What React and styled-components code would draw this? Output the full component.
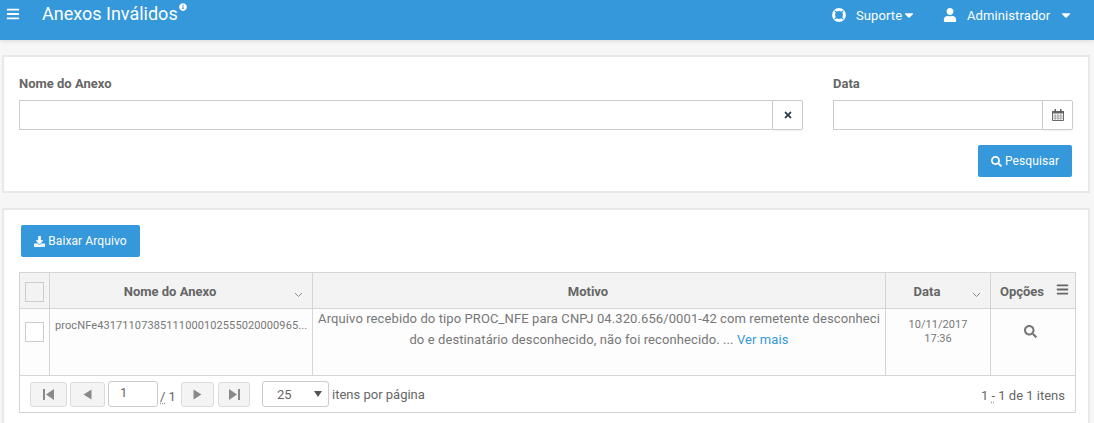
import React from 'react';
import styled, { createGlobalStyle } from 'styled-components';
import { FaBars, FaCaretDown, FaDownload, FaInfoCircle, FaSearch, FaTimes, FaUser } from 'react-icons/fa';

const GlobalStyle = createGlobalStyle`
  html, body {
    margin: 0;
    padding: 0;
    height: 423px;
    overflow: hidden;
    background: #f6f6f6;
    font-family: Roboto, 'Liberation Sans', sans-serif;
    font-size: 13px;
    color: #666;
  }
  * { box-sizing: border-box; }
`;

const Navbar = styled.header`
  display: flex;
  align-items: flex-start;
  height: 40px;
  background: #3498db;
  color: #fff;
  box-shadow: 0 1px 4px rgba(0, 0, 0, 0.12);
`;

const MenuToggle = styled.span`
  display: flex;
  width: 42px;
  padding: 7px 0 0 6px;
  font-size: 14px;
`;

const PageTitle = styled.h1`
  flex: 1;
  margin: 0;
  padding-top: 2px;
  font-size: 18px;
  line-height: 24px;
  font-weight: 400;
  svg { font-size: 8px; vertical-align: 9px; margin-left: 1px; }
`;

const NavItem = styled.span`
  display: flex;
  align-items: center;
  height: 30px;
  width: ${(props) => props.width};
  font-size: 13px;
  letter-spacing: 0.1px;
`;

const NavIcon = styled.span`
  display: flex;
  width: ${(props) => props.gap};
  font-size: 14px;
  svg { width: 14px; height: 14px; }
`;

const Caret = styled.span`
  display: flex;
  margin-left: ${(props) => props.offset || '0'};
  font-size: 14px;
`;

const Panel = styled.section`
  margin: ${(props) => props.margin};
  width: 1088px;
  height: ${(props) => props.height};
  padding: ${(props) => props.padding};
  background: #fff;
  border: 2px solid #e8e8e8;
`;

const FilterGrid = styled.div`
  display: grid;
  grid-template-columns: 784px 240px;
  column-gap: 30px;
`;

const Label = styled.label`
  display: block;
  height: 24px;
  font-size: 13px;
  line-height: 15px;
  font-weight: 700;
  color: #666;
`;

const InputGroup = styled.div`
  display: flex;
  height: 30px;
`;

const TextInput = styled.input`
  flex: 1;
  min-width: 0;
  height: 30px;
  border: 1px solid #ccc;
  border-right: 0;
  background: #fff;
  outline: none;
`;

const AddOn = styled.span`
  display: flex;
  align-items: center;
  justify-content: center;
  width: 31px;
  height: 30px;
  border: 1px solid #ccc;
  border-radius: 0 2px 2px 0;
  box-shadow: 0 1px 2px rgba(0, 0, 0, 0.06);
  font-size: ${(props) => props.iconSize};
  color: ${(props) => props.color};
`;

const Actions = styled.div`
  display: flex;
  justify-content: flex-end;
  margin: 15px 1px 0 0;
`;

const PrimaryButton = styled.button`
  display: flex;
  align-items: center;
  justify-content: center;
  gap: 3px;
  width: ${(props) => props.width};
  height: 32px;
  padding: 0;
  border: 0;
  border-radius: 2px;
  background: #3498db;
  color: #fff;
  font-family: inherit;
  font-size: 12px;
  letter-spacing: 0.1px;
  svg { font-size: 11px; }
`;

const Table = styled.div`
  width: 1057px;
  margin: 15px 0 0 -2px;
  border: 1px solid #d5d5d5;
`;

const GridRow = styled.div`
  display: grid;
  grid-template-columns: 29px 263px 573px 105px 1fr;
  height: ${(props) => props.height};
  background: ${(props) => props.background};
  border-bottom: 1px solid #d5d5d5;
`;

const HeadCell = styled.div`
  position: relative;
  display: flex;
  align-items: center;
  justify-content: center;
  padding: ${(props) => props.padding || '1px 22px 0 0'};
  border-left: ${(props) => (props.first ? '0' : '1px solid #d5d5d5')};
  font-size: 13px;
  font-weight: 700;
  color: #666;
`;

const BodyCell = styled.div`
  padding: ${(props) => props.padding || '0'};
  border-left: ${(props) => (props.first ? '0' : '1px solid #d5d5d5')};
  font-size: ${(props) => props.size || '13px'};
  line-height: ${(props) => props.leading || '21px'};
  letter-spacing: ${(props) => props.tracking || '0'};
  text-align: ${(props) => props.align || 'center'};
  color: #777;
`;

const FileName = styled(BodyCell)`
  white-space: nowrap;
  overflow: hidden;
`;

const ReasonText = styled.p`
  margin: -1px 0 0;
`;

const CheckBox = styled.span`
  display: block;
  width: 19px;
  height: 20px;
  border: 1px solid #ccc;
  background: ${(props) => props.background || '#fff'};
`;

const SortMark = styled.svg`
  position: absolute;
  right: 9px;
  bottom: 10px;
  width: 9px;
  height: 6px;
  fill: none;
  stroke: #888;
`;

const ColumnMenu = styled.span`
  position: absolute;
  right: 6px;
  top: 10px;
  display: flex;
  font-size: 13px;
  color: #666;
`;

const MoreLink = styled.a`
  color: #3498db;
`;

const Pager = styled.div`
  display: flex;
  align-items: center;
  height: 36px;
  padding: 0 10px;
  color: #666;
  font-size: 13px;
`;

const PagerButton = styled.span`
  display: flex;
  align-items: center;
  justify-content: center;
  width: ${(props) => props.width};
  height: 25px;
  margin-right: ${(props) => props.gap};
  background: #f4f4f4;
  border: 1px solid #dcdcdc;
  border-radius: 3px;
  svg { width: 13px; height: 13px; fill: #8a8a8a; }
`;

const PageInput = styled.span`
  width: 50px;
  height: 26px;
  margin-right: 2px;
  padding: 2px 0 0 11px;
  border: 1px solid #ccc;
  border-radius: 3px;
  background: #fff;
  line-height: 18px;
`;

const PageTotal = styled.span`
  width: 21px;
  padding-top: 4px;
  white-space: nowrap;
`;

const DottedMark = styled.span`
  text-decoration: underline dotted #999;
  text-underline-offset: 2px;
`;

const PageSize = styled.span`
  display: flex;
  align-items: center;
  justify-content: space-between;
  width: 67px;
  height: 26px;
  margin: 0 3px 0 12px;
  padding: 0 6px 0 14px;
  border: 1px solid #ccc;
  border-radius: 3px;
  font-size: 13px;
  svg { width: 8px; height: 6px; fill: #555; }
`;

const PagerInfo = styled.span`
  margin-left: auto;
  padding-top: 3px;
  font-size: 13px;
`;

const LifeRing = () => (
  <svg viewBox="0 0 14 14">
    <circle cx="7" cy="7" r="5.4" fill="none" stroke="#fff" strokeWidth="3" />
    <path d="M4.4 4.4L2.6 2.6M9.6 4.4l1.8-1.8M4.4 9.6l-1.8 1.8M9.6 9.6l1.8 1.8" stroke="#3498db" strokeWidth="1.1" />
  </svg>
);

const CalendarIcon = () => (
  <svg width="12" height="12" viewBox="0 0 12 12">
    <path d="M.5 2.5h11v9H.5z" fill="none" stroke="#666" />
    <path d="M0 2h12v2.5H0z" fill="#666" />
    <path d="M2.5 0h1.4v3H2.5zM8.1 0h1.4v3H8.1z" fill="#555" />
    <path d="M0 7h12M0 9.2h12M3.2 4.5v7M6 4.5v7M8.8 4.5v7" stroke="#888" strokeWidth="0.7" />
  </svg>
);

const StepIcon = ({ flip }) => (
  <svg viewBox="0 0 13 13" style={flip ? { transform: 'scaleX(-1)' } : undefined}>
    <path d="M1 1h2v11H1zM12 1v11L4 6.5z" />
  </svg>
);

const ArrowIcon = ({ flip }) => (
  <svg viewBox="0 0 13 13" style={flip ? { transform: 'scaleX(-1)' } : undefined}>
    <path d="M10.5 1.5v10l-8-5z" />
  </svg>
);

const Sort = () => (
  <SortMark viewBox="0 0 9 6">
    <path d="M1 1l3.5 3.5L8 1" />
  </SortMark>
);

export default function App() {
  return (
    <>
      <GlobalStyle />
      <Navbar>
        <MenuToggle><FaBars /></MenuToggle>
        <PageTitle>Anexos Inválidos<FaInfoCircle /></PageTitle>
        <NavItem width="111px">
          <NavIcon gap="24px"><LifeRing /></NavIcon>
          Suporte<Caret><FaCaretDown /></Caret>
        </NavItem>
        <NavItem width="151px">
          <NavIcon gap="24px"><FaUser /></NavIcon>
          Administrador<Caret offset="9px"><FaCaretDown /></Caret>
        </NavItem>
      </Navbar>

      <Panel margin="15px 0 0 2px" height="138px" padding="19px 15px 0">
        <FilterGrid>
          <div>
            <Label>Nome do Anexo</Label>
            <InputGroup>
              <TextInput />
              <AddOn iconSize="10px" color="#2c3e50"><FaTimes /></AddOn>
            </InputGroup>
          </div>
          <div>
            <Label>Data</Label>
            <InputGroup>
              <TextInput />
              <AddOn><CalendarIcon /></AddOn>
            </InputGroup>
            <Actions>
              <PrimaryButton width="94px"><FaSearch />Pesquisar</PrimaryButton>
            </Actions>
          </div>
        </FilterGrid>
      </Panel>

      <Panel margin="15px 0 0 2px" height="230px" padding="15px 17px 0">
        <PrimaryButton width="119px"><FaDownload />Baixar Arquivo</PrimaryButton>
        <Table>
          <GridRow height="36px" background="#f3f3f3">
            <HeadCell first padding="3px 0 0"><CheckBox background="#f3f3f3" /></HeadCell>
            <HeadCell>Nome do Anexo<Sort /></HeadCell>
            <HeadCell>Motivo</HeadCell>
            <HeadCell>Data<Sort /></HeadCell>
            <HeadCell>Opções<ColumnMenu><FaBars /></ColumnMenu></HeadCell>
          </GridRow>
          <GridRow height="67px" background="#fdfdfd">
            <BodyCell first padding="13px 0 0 5px"><CheckBox /></BodyCell>
            <FileName size="11px" align="left" tracking="0.1px" padding="6px 0 0 5px">procNFe43171107385111000102555020000965...</FileName>
            <BodyCell tracking="0.1px" padding="0 5px">
              <ReasonText>
                Arquivo recebido do tipo PROC_NFE para CNPJ 04.320.656/0001-42 com remetente desconheci
                <br />
                do e destinatário desconhecido, não foi reconhecido. ... <MoreLink>Ver mais</MoreLink>
              </ReasonText>
            </BodyCell>
            <BodyCell size="11px" leading="14px" tracking="0.05px" padding="9px 0 0">10/11/2017<br />17:36</BodyCell>
            <BodyCell padding="16px 6px 0 0" leading="13px"><FaSearch /></BodyCell>
          </GridRow>
          <Pager>
            <PagerButton width="37px" gap="3px"><StepIcon /></PagerButton>
            <PagerButton width="35px" gap="3px"><ArrowIcon /></PagerButton>
            <PageInput>1</PageInput>
            <PageTotal><DottedMark>/</DottedMark> 1</PageTotal>
            <PagerButton width="33px" gap="4px"><ArrowIcon flip /></PagerButton>
            <PagerButton width="32px" gap="0"><StepIcon flip /></PagerButton>
            <PageSize>25<svg viewBox="0 0 8 6"><path d="M0 0h8L4 6z" /></svg></PageSize>
            itens por página
            <PagerInfo>1 <DottedMark>-</DottedMark> 1 de 1 itens</PagerInfo>
          </Pager>
        </Table>
      </Panel>
    </>
  );
}
